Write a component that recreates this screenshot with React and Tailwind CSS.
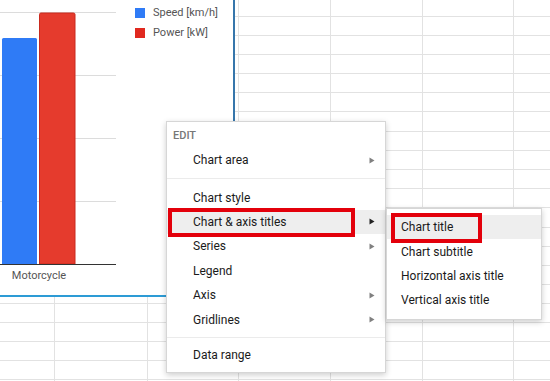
import React from "react";

const rowHeights = [17, 19, 19, 19, 19, 19, 20, 19, 19, 19, 19, 20, 19, 19, 19, 19, 19, 19, 19, 19, 19];
const colWidths = [55, 93, 91, 92, 92, 91];

function Arrow({ dark }) {
  return (
    <svg width="6" height="7" viewBox="0 0 6 7">
      <polygon points="0.5,0.5 5.5,3.5 0.5,6.5" fill={dark ? "#222" : "#808080"} />
    </svg>
  );
}

function Item({ label, arrow, active }) {
  return (
    <div className={`h-[24.4px] flex items-center justify-between pl-[26px] pr-[10px] ${active ? "bg-[#eeeeee]" : ""}`}>
      <span>{label}</span>
      {arrow && <Arrow dark={active} />}
    </div>
  );
}

function SubItem({ label, active }) {
  return (
    <div className={`h-[24.4px] flex items-center pl-[14px] ${active ? "bg-[#eeeeee]" : ""}`}>
      <span>{label}</span>
    </div>
  );
}

export default function App() {
  return (
    <div className="relative w-[550px] h-[381px] overflow-hidden bg-white font-[family-name:Roboto,sans-serif]">
      {/* spreadsheet grid */}
      <div className="flex flex-col">
        {rowHeights.map((h, r) => (
          <div key={r} className="flex border-b border-[#e2e2e2]" style={{ height: h }}>
            {colWidths.map((w, c) => (
              <div key={c} className="border-r border-[#e2e2e2] shrink-0" style={{ width: w }} />
            ))}
            <div className="flex-1" />
          </div>
        ))}
      </div>

      {/* chart */}
      <div className="absolute left-0 top-0 w-[235px] h-[297px] bg-white border-r-2 border-r-[#3776ab] border-b-2 border-b-[#2d9bd5] flex">
        <div className="w-[116px] flex flex-col">
          <svg width="116" height="265" viewBox="0 0 116 265">
            {[12.5, 75.5, 138.5, 201.5].map((y) => (
              <line key={y} x1="0" x2="116" y1={y} y2={y} stroke="#dcdcdc" strokeWidth="1" />
            ))}
            <path d="M2 264 V39.5 Q2 38 3.5 38 H35.5 Q37 38 37 39.5 V264 Z" fill="#2f7bf6" />
            <path d="M39.5 264 V14.5 Q39.5 13 41 13 H73.5 Q75 13 75 14.5 V264 Z" fill="#e53b2d" stroke="#c92a1e" strokeWidth="1" />
            <line x1="0" x2="116" y1="264.5" y2="264.5" stroke="#333" strokeWidth="1" />
          </svg>
          <div className="w-[78px] mt-[4px] text-center text-[11px] leading-[13px] text-[#555]">Motorcycle</div>
        </div>
        <div className="ml-[19px] pt-[7px] flex flex-col gap-[8px]">
          <div className="flex items-center gap-[8px] h-[12px]">
            <div className="w-[10px] h-[10px] bg-[#2f7bf6]" />
            <span className="text-[11px] leading-[12px] text-[#555]">Speed [km/h]</span>
          </div>
          <div className="flex items-center gap-[8px] h-[12px]">
            <div className="w-[10px] h-[10px] bg-[#e0291f]" />
            <span className="text-[11px] leading-[12px] text-[#555]">Power [kW]</span>
          </div>
        </div>
      </div>

      {/* main context menu */}
      <div className="absolute left-[166px] top-[121px] w-[220px] bg-white border border-[#d6d6d6] shadow-[0_2px_6px_rgba(0,0,0,0.2)] pt-[5px] pb-[5px] text-[12px] text-[#1a1a1a]">
        <div className="h-[18px] mb-[3px] flex items-center pl-[6px] text-[11px] font-medium text-[#777]">EDIT</div>
        <Item label="Chart area" arrow />
        <div className="my-[6px] h-px bg-[#ebebeb]" />
        <Item label="Chart style" />
        <Item label="Chart & axis titles" arrow active />
        <Item label="Series" arrow />
        <Item label="Legend" />
        <Item label="Axis" arrow />
        <Item label="Gridlines" arrow />
        <div className="my-[5px] h-px bg-[#ebebeb]" />
        <Item label="Data range" />
      </div>

      {/* submenu */}
      <div className="absolute left-[386px] top-[208px] w-[156px] bg-white border border-[#d6d6d6] shadow-[0_2px_6px_rgba(0,0,0,0.2)] pt-[6px] pb-[6px] text-[12px] text-[#1a1a1a]">
        <SubItem label="Chart title" active />
        <SubItem label="Chart subtitle" />
        <SubItem label="Horizontal axis title" />
        <SubItem label="Vertical axis title" />
      </div>

      {/* red annotation boxes */}
      <div className="absolute left-[168px] top-[208px] w-[187px] h-[29px] border-4 border-[#e3000b]" />
      <div className="absolute left-[391px] top-[213px] w-[91px] h-[30px] border-4 border-[#e3000b]" />
    </div>
  );
}
